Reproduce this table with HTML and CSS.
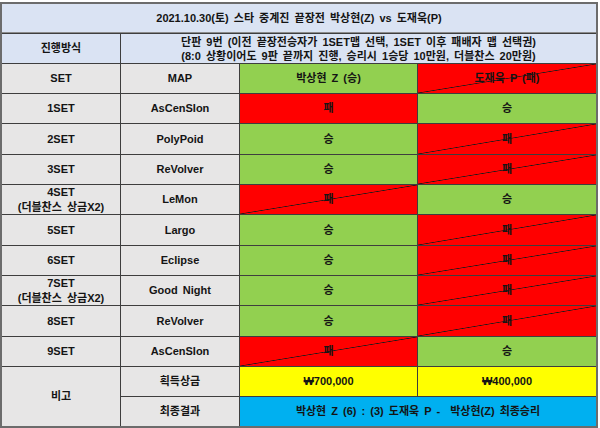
FILE: index.html
```html
<!DOCTYPE html>
<html lang="ko">
<head>
<meta charset="utf-8">
<link rel="stylesheet" href="styles.css">
</head>
<body>
<div class="sheet">
  <div class="c title span4">2021.10.30(토) 스타 중계진 끝장전 박상현(Z) vs 도재욱(P)</div>

  <div class="c blue">진행방식</div>
  <div class="c blue span3 rule">단판 9번 (이전 끝장전승자가 1SET맵 선택, 1SET 이후 패배자 맵 선택권)<br>(8:0 상황이어도 9판 끝까지 진행, 승리시 1승당 10만원, 더블찬스 20만원)</div>

  <div class="c gray">SET</div>
  <div class="c gray">MAP</div>
  <div class="c win">박상현 Z (승)</div>
  <div class="c lose slash">도재욱 P (패)</div>

  <div class="c gray">1SET</div>
  <div class="c gray">AsCenSIon</div>
  <div class="c lose">패</div>
  <div class="c win">승</div>

  <div class="c gray">2SET</div>
  <div class="c gray">PolyPoid</div>
  <div class="c win">승</div>
  <div class="c lose slash">패</div>

  <div class="c gray">3SET</div>
  <div class="c gray">ReVolver</div>
  <div class="c win">승</div>
  <div class="c lose slash">패</div>

  <div class="c gray two">4SET<br>(더블찬스 상금X2)</div>
  <div class="c gray">LeMon</div>
  <div class="c lose slash">패</div>
  <div class="c win">승</div>

  <div class="c gray">5SET</div>
  <div class="c gray">Largo</div>
  <div class="c win">승</div>
  <div class="c lose slash">패</div>

  <div class="c gray">6SET</div>
  <div class="c gray">Eclipse</div>
  <div class="c win">승</div>
  <div class="c lose slash">패</div>

  <div class="c gray two">7SET<br>(더블찬스 상금X2)</div>
  <div class="c gray">Good Night</div>
  <div class="c win">승</div>
  <div class="c lose slash">패</div>

  <div class="c gray">8SET</div>
  <div class="c gray">ReVolver</div>
  <div class="c win">승</div>
  <div class="c lose slash">패</div>

  <div class="c gray">9SET</div>
  <div class="c gray">AsCenSIon</div>
  <div class="c lose slash">패</div>
  <div class="c win">승</div>

  <div class="c gray rows2">비고</div>
  <div class="c gray">획득상금</div>
  <div class="c yellow">₩700,000</div>
  <div class="c yellow">₩400,000</div>

  <div class="c gray">최종결과</div>
  <div class="c sky span2">박상현 Z (6) : (3) 도재욱 P -&nbsp; 박상현(Z) 최종승리</div>
</div>
</body>
</html>
```

FILE: styles.css
```css
html, body {
  margin: 0;
  padding: 0;
  background: #ffffff;
}

body {
  width: 600px;
  height: 428px;
  overflow: hidden;
  font-family: "Liberation Sans", "Noto Sans CJK KR", sans-serif;
  font-weight: bold;
  font-size: 11px;
  word-spacing: 2px;
  color: #141414;
}

.sheet {
  margin-top: 2px;
  width: 594px;
  border: 2px solid #6c6c6c;
  background: #3e3e3e;
  display: grid;
  grid-template-columns: 118px 118px 177px 178px;
  grid-template-rows: 29px 29px 29px 29px 30px 29px 29px 30px 29px 29px 30px 29px 29px 29px;
  gap: 1px;
}

.c {
  display: flex;
  align-items: center;
  justify-content: center;
  text-align: center;
  line-height: 15px;
  white-space: nowrap;
  overflow: hidden;
}

.span4 { grid-column: span 4; }
.span3 { grid-column: span 3; }
.span2 { grid-column: span 2; }
.rows2 { grid-row: span 2; }

.title {
  background: #dae3f3;
  border-bottom: 1px solid #8c8c8c;
  padding-top: 1px;
  box-sizing: border-box;
}

.blue { background: #dae3f3; }
.rule { line-height: 14px; }

.gray { background: #e7e6e6; }
.win { background: #92d050; }
.lose { background: #ff0000; }
.yellow { background: #ffff00; }
.sky { background: #00b0f0; }

.lose.slash {
  background:
    linear-gradient(to bottom right,
      rgba(0,0,0,0) calc(50% - 0.7px),
      #1a1a1a 50%,
      rgba(0,0,0,0) calc(50% + 0.7px)),
    #ff0000;
}

.two { line-height: 15px; }
```
